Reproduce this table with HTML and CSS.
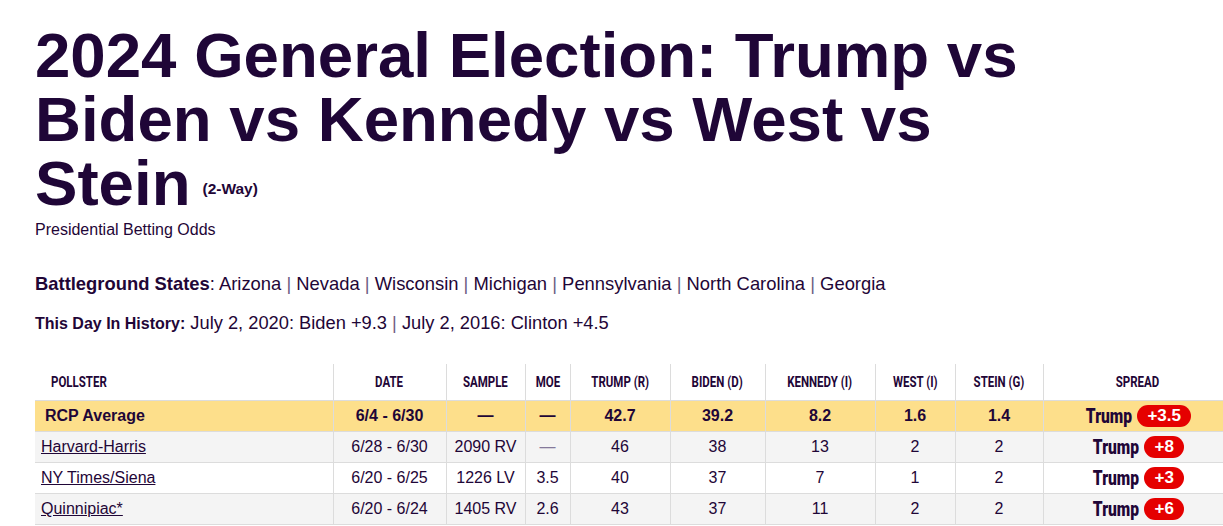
FILE: index.html
```html
<!DOCTYPE html>
<html lang="en">
<head>
<meta charset="utf-8">
<title>2024 General Election: Trump vs Biden vs Kennedy vs West vs Stein</title>
<link rel="stylesheet" href="styles.css">
</head>
<body>
<main class="page">
  <h1 class="title">2024 General Election: Trump vs Biden vs Kennedy vs West vs Stein<span class="title-note">(2-Way)</span></h1>
  <p class="subtitle">Presidential Betting Odds</p>
  <p class="states"><strong>Battleground States</strong>: Arizona <span class="sep">|</span> Nevada <span class="sep">|</span> Wisconsin <span class="sep">|</span> Michigan <span class="sep">|</span> Pennsylvania <span class="sep">|</span> North Carolina <span class="sep">|</span> Georgia</p>
  <p class="history"><strong>This Day In History:</strong> July 2, 2020: Biden +9.3 <span class="sep">|</span> July 2, 2016: Clinton +4.5</p>

  <table class="polls">
    <colgroup>
      <col class="c-pollster">
      <col class="c-date">
      <col class="c-sample">
      <col class="c-moe">
      <col class="c-trump">
      <col class="c-biden">
      <col class="c-kennedy">
      <col class="c-west">
      <col class="c-stein">
      <col class="c-spread">
    </colgroup>
    <thead>
      <tr>
        <th class="th-left"><span class="cond cond-left">Pollster</span></th>
        <th><span class="cond">Date</span></th>
        <th><span class="cond">Sample</span></th>
        <th><span class="cond">MoE</span></th>
        <th><span class="cond">Trump (R)</span></th>
        <th><span class="cond">Biden (D)</span></th>
        <th><span class="cond">Kennedy (I)</span></th>
        <th><span class="cond">West (I)</span></th>
        <th><span class="cond">Stein (G)</span></th>
        <th><span class="cond">Spread</span></th>
      </tr>
    </thead>
    <tbody>
      <tr class="avg">
        <td class="pollster">RCP Average</td>
        <td>6/4 - 6/30</td>
        <td>—</td>
        <td>—</td>
        <td>42.7</td>
        <td>39.2</td>
        <td>8.2</td>
        <td>1.6</td>
        <td>1.4</td>
        <td><div class="spread"><span class="winner">Trump</span><span class="badge">+3.5</span></div></td>
      </tr>
      <tr class="alt">
        <td class="pollster"><a href="#">Harvard-Harris</a></td>
        <td>6/28 - 6/30</td>
        <td>2090 RV</td>
        <td class="na">—</td>
        <td>46</td>
        <td>38</td>
        <td>13</td>
        <td>2</td>
        <td>2</td>
        <td><div class="spread"><span class="winner">Trump</span><span class="badge">+8</span></div></td>
      </tr>
      <tr>
        <td class="pollster"><a href="#">NY Times/Siena</a></td>
        <td>6/20 - 6/25</td>
        <td>1226 LV</td>
        <td>3.5</td>
        <td>40</td>
        <td>37</td>
        <td>7</td>
        <td>1</td>
        <td>2</td>
        <td><div class="spread"><span class="winner">Trump</span><span class="badge">+3</span></div></td>
      </tr>
      <tr class="alt">
        <td class="pollster"><a href="#">Quinnipiac*</a></td>
        <td>6/20 - 6/24</td>
        <td>1405 RV</td>
        <td>2.6</td>
        <td>43</td>
        <td>37</td>
        <td>11</td>
        <td>2</td>
        <td>2</td>
        <td><div class="spread"><span class="winner">Trump</span><span class="badge">+6</span></div></td>
      </tr>
    </tbody>
  </table>
</main>
</body>
</html>
```

FILE: styles.css
```css
html {
  overflow-x: hidden;
}

body {
  margin: 0;
  background: #ffffff;
  color: #1f0637;
  font-family: "Liberation Sans", Arial, Helvetica, sans-serif;
  overflow-x: hidden;
}

.page {
  padding: 23px 0 0 35px;
}

.title {
  margin: 0 0 5px;
  max-width: 1010px;
  font-size: 63.6px;
  line-height: 64px;
  font-weight: 700;
}

.title-note {
  display: inline-block;
  margin-left: 12px;
  font-size: 15.5px;
  line-height: 16px;
  vertical-align: 11px;
}

.subtitle {
  margin: 0;
  font-size: 16px;
  line-height: 20px;
}

.states {
  margin: 32px 0 0;
  font-size: 18.4px;
  line-height: 24px;
}

.history {
  margin: 15px 0 0;
  font-size: 18.3px;
  line-height: 24px;
}

.history strong {
  font-size: 16px;
}

.sep {
  color: #6e5d83;
}

.polls {
  margin-top: 28px;
  width: 1197px;
  border-collapse: collapse;
  table-layout: fixed;
}

.c-pollster { width: 298px; }
.c-date { width: 113px; }
.c-sample { width: 79px; }
.c-moe { width: 45px; }
.c-trump { width: 100px; }
.c-biden { width: 95px; }
.c-kennedy { width: 110px; }
.c-west { width: 80px; }
.c-stein { width: 88px; }
.c-spread { width: 189px; }

.polls th {
  height: 36px;
  padding: 0;
  border-left: 1px solid #dcdcdc;
  border-bottom: 1px solid #dcdcdc;
  font-family: Roboto, "Liberation Sans", sans-serif;
  font-size: 14px;
  font-weight: 700;
  text-transform: uppercase;
  text-align: center;
  vertical-align: middle;
  white-space: nowrap;
}

.polls th:first-child,
.polls td:first-child {
  border-left: none;
}

.polls .th-left {
  text-align: left;
  padding-left: 16px;
}

.cond {
  display: inline-block;
  transform: scaleX(0.82);
}

.cond-left {
  transform-origin: left center;
}

.polls td {
  height: 30px;
  padding: 0;
  border-left: 1px solid #dcdcdc;
  border-bottom: 1px solid #dcdcdc;
  font-size: 16px;
  text-align: center;
  vertical-align: middle;
  white-space: nowrap;
}

.polls td.pollster {
  text-align: left;
  padding-left: 6px;
}

.polls a {
  color: #1f0637;
  text-decoration: underline;
}

.avg td {
  background: #fddf8b;
  font-weight: 700;
}

.polls .avg td.pollster {
  padding-left: 10px;
}

.alt td {
  background: #f4f4f4;
}

.polls td.na {
  color: #85799a;
}

.spread {
  display: flex;
  justify-content: center;
  align-items: center;
  gap: 5px;
}

.winner {
  display: inline-block;
  margin: 0 -5px;
  font-family: Roboto, "Liberation Sans", sans-serif;
  font-size: 19.5px;
  font-weight: 900;
  transform: scaleX(0.8);
}

.badge {
  padding: 0 10px;
  border-radius: 11px;
  background: #e50000;
  color: #ffffff;
  font-size: 17px;
  font-weight: 700;
  line-height: 22px;
}
```
